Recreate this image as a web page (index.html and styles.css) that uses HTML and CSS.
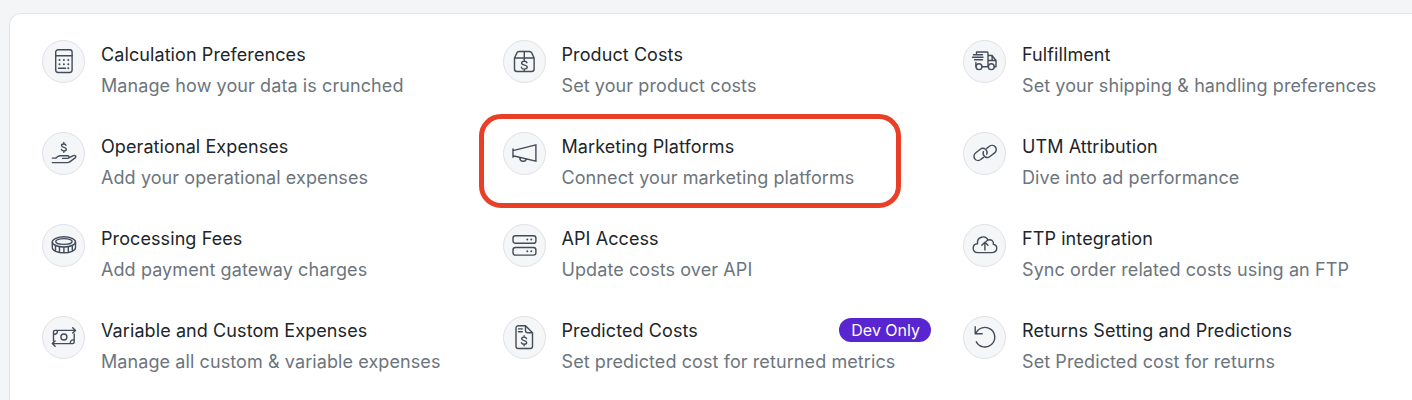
FILE: index.html
```
<!DOCTYPE html>
<html lang="en">
<head>
  <meta charset="UTF-8">
  <meta name="viewport" content="width=device-width, initial-scale=1.0">
  <title>Settings</title>
  <link rel="stylesheet" href="styles.css">
</head>
<body>

  <div class="card">
    <div class="item">
      <div class="icon">
        <svg viewBox="-.5 -.5 25 25"><rect x="4.2" y="0.2" width="16.4" height="22.8" rx="2.4"/><path d="M4.2 6.3h16.4M7 18.8h7"/><path class="dots" d="M8 10.5h0M12.4 10.5h0M16.8 10.5h0M8 14.8h0M12.4 14.8h0M16.8 14.8h0M16.8 18.8h0"/></svg>
      </div>
      <div class="text">
        <div class="title"><span>Calculation Preferences</span></div>
        <div class="desc">Manage how your data is crunched</div>
      </div>
    </div>

    <div class="item">
      <div class="icon">
        <svg viewBox="-.5 -.5 25 25"><path d="M2 8.5v11a2.5 2.5 0 0 0 2.5 2.5h14.6a2.5 2.5 0 0 0 2.5-2.5v-11L19.2 3.4a2.5 2.5 0 0 0-2.2-1.4H6.6a2.5 2.5 0 0 0-2.2 1.4zM2 8.5h19.6M11.8 2v8"/><path d="M14.5 13.2c-.3-1-1.3-1.5-2.7-1.5-1.6 0-2.7.7-2.7 1.9 0 2.9 5.6 1.1 5.6 4 0 1.3-1.2 2-2.9 2-1.5 0-2.6-.6-2.9-1.8M11.8 10v1.7M11.8 19.6v1.4"/></svg>
      </div>
      <div class="text">
        <div class="title"><span>Product Costs</span></div>
        <div class="desc">Set your product costs</div>
      </div>
    </div>

    <div class="item">
      <div class="icon">
        <svg viewBox="-.5 -.5 25 25"><path d="M4 4V2.5h10.5a1 1 0 0 1 1 1v13.7M15.5 6h4l4 5v6.2h-1.7M15.5 11h8M19.6 6v5M9.5 17.2h6.3M3.4 17.2V13M1 5.3h9M0 7.8h10.5M2 10.3h8"/><circle cx="6.5" cy="17.2" r="2.9"/><circle cx="18.8" cy="17.2" r="2.9"/></svg>
      </div>
      <div class="text">
        <div class="title"><span>Fulfillment</span></div>
        <div class="desc">Set your shipping &amp; handling preferences</div>
      </div>
    </div>

    <div class="item">
      <div class="icon">
        <svg viewBox="-.5 -.5 25 25"><path d="M14.5 3.7c-.3-.8-1.1-1.2-2.2-1.2-1.4 0-2.3.6-2.3 1.6 0 2.6 4.8 1 4.8 3.6 0 1.1-1 1.7-2.4 1.7-1.3 0-2.2-.5-2.5-1.5M12.3 1v1.5M12.3 9.4v1.4"/><path d="M.8 16.6h3.4l2.2-1.6c.8-.6 1.6-.8 2.5-.8h7.2c2 0 2.1 2.6 0 2.7h-5M17.8 16.2l4-2c1.8-.9 3.5.8 1.8 2.2l-5 3.7c-.9.7-1.7 1-2.8 1H.8"/></svg>
      </div>
      <div class="text">
        <div class="title"><span>Operational Expenses</span></div>
        <div class="desc">Add your operational expenses</div>
      </div>
    </div>

    <div class="item">
      <div class="highlight"></div>
      <div class="icon">
        <svg viewBox="-.5 -.5 25 25"><path d="M.5 7.5v8.3M.5 9.1L23.4 3.3v16.4L.5 14.3M7.3 16c-.2 4.4 5.8 5 6.4 1.5" stroke-linejoin="miter"/></svg>
      </div>
      <div class="text">
        <div class="title"><span>Marketing Platforms</span></div>
        <div class="desc">Connect your marketing platforms</div>
      </div>
    </div>

    <div class="item">
      <div class="icon">
        <svg viewBox="-.5 -.5 25 25"><path transform="translate(8 12.9) rotate(-38)" d="M.5 4.2H-3a4.2 4.2 0 0 1 0-8.4H3a4.2 4.2 0 0 1 2 7.9"/><path transform="translate(17.2 9.900) rotate(-38)" d="M-.5-4.200H3a4.200 4.200 0 0 1 0 8.400H-3a4.200 4.200 0 0 1-2-7.900"/></svg>
      </div>
      <div class="text">
        <div class="title"><span>UTM Attribution</span></div>
        <div class="desc">Dive into ad performance</div>
      </div>
    </div>

    <div class="item">
      <div class="icon">
        <svg viewBox="-.5 -.5 25 25"><ellipse cx="12.4" cy="8.4" rx="11.6" ry="5.1"/><ellipse cx="12.4" cy="8" rx="8.2" ry="2.9"/><path d="M.8 8.4v5.8c0 2.8 5.2 5.1 11.6 5.1S24 17 24 14.2V8.4M4 12v5.4M8 13.2v5.6M12.4 13.5v5.7M16.8 13.2v5.6M20.8 12v5.4"/></svg>
      </div>
      <div class="text">
        <div class="title"><span>Processing Fees</span></div>
        <div class="desc">Add payment gateway charges</div>
      </div>
    </div>

    <div class="item">
      <div class="icon">
        <svg viewBox="-.5 -.5 25 25"><rect x=".5" y="2.2" width="22.9" height="7.6" rx="2.4"/><rect x=".5" y="14" width="22.9" height="7.6" rx="2.4"/><path class="dots" d="M14.8 6h0M18.8 6h0M14.8 17.8h0M18.8 17.8h0"/></svg>
      </div>
      <div class="text">
        <div class="title"><span>API Access</span></div>
        <div class="desc">Update costs over API</div>
      </div>
    </div>

    <div class="item">
      <div class="icon">
        <svg viewBox="-.5 -.5 25 25"><path d="M5.4 19.1C-.9 18.7-.8 10.7 5 10.2 4 3.2 13.2 1.1 15.5 6.6c3.1-1.3 6.1 1.1 5.3 4.2 5 1.1 4.4 7.8-.8 8.3zM15.5 6.6c-.9.3-1.5.8-2 1.5"/><path d="M12.4 16.5V9M9.3 11.8l3.1-3.1 3.1 3.1"/></svg>
      </div>
      <div class="text">
        <div class="title"><span>FTP integration</span></div>
        <div class="desc">Sync order related costs using an FTP</div>
      </div>
    </div>

    <div class="item">
      <div class="icon">
        <svg viewBox="-.5 -.5 25 25"><path d="M2 15.5V6.5a1.6 1.6 0 0 1 1.6-1.6H24M21.2 2.2L24 4.9l-2.8 2.7M22.7 8.5v8a1.6 1.6 0 0 1-1.6 1.6H.8M3.6 15.4L.8 18.1l2.8 2.7M2 8.9c2.5 0 4-1.5 4-4M22.7 14.1c-2.5 0-4 1.5-4 4"/><circle cx="12.4" cy="11.5" r="3"/></svg>
      </div>
      <div class="text">
        <div class="title"><span>Variable and Custom Expenses</span></div>
        <div class="desc">Manage all custom &amp; variable expenses</div>
      </div>
    </div>

    <div class="item">
      <div class="icon">
        <svg viewBox="-.5 -.5 25 25"><path d="M13 .2H5.8a2.3 2.3 0 0 0-2.3 2.3v18.2A2.3 2.3 0 0 0 5.8 23h11.9a2.3 2.3 0 0 0 2.3-2.3V7.2zM13 .2v4.7a2.3 2.3 0 0 0 2.3 2.3H20M6 3.4h3.8M6 6.2h3.8"/><path d="M14 13c-.3-.9-1.2-1.4-2.4-1.4-1.4 0-2.4.7-2.4 1.7 0 2.6 5 1.1 5 3.7 0 1.2-1.1 1.8-2.6 1.8-1.3 0-2.3-.5-2.6-1.6M11.6 10.2v1.4M11.6 18.8v1.5"/></svg>
      </div>
      <div class="text">
        <div class="title"><span>Predicted Costs</span><span class="badge">Dev Only</span></div>
        <div class="desc">Set predicted cost for returned metrics</div>
      </div>
    </div>

    <div class="item">
      <div class="icon">
        <svg viewBox="-.5 -.5 25 25"><path d="M3.8 16.3A9.8 9.8 0 1 0 3.3 8.2M2.7 1.3v6.9h7"/></svg>
      </div>
      <div class="text">
        <div class="title"><span>Returns Setting and Predictions</span></div>
        <div class="desc">Set Predicted cost for returns</div>
      </div>
    </div>
  </div>

</body>
</html>
```
FILE: styles.css
```
body {
  margin: 0;
  padding: 13px 0 0 9px;
  overflow: hidden;
  background-color: #f4f5f7;
  font-family: Inter, 'Liberation Sans', sans-serif;
  font-size: 18px;
  letter-spacing: 0.09px;
  color: #212529;
}
.card {
  box-sizing: border-box;
  width: 1416px;
  height: 387px;
  padding: 26px 32px 0;
  display: grid;
  grid-template-columns: repeat(3, 428.5px);
  grid-auto-rows: 62px;
  gap: 30px 32px;
  background-color: #fff;
  border: 1px solid #e3e5e9;
  border-bottom: 0;
  border-radius: 12px 12px 0 0;
}
.item {
  position: relative;
  display: flex;
  gap: 16px;
}
.icon {
  box-sizing: border-box;
  flex: none;
  width: 43px;
  height: 43px;
  display: flex;
  align-items: center;
  justify-content: center;
  background-color: #f4f6f8;
  border: 1px solid #dfe1e6;
  border-radius: 50%;
}
.icon svg {
  width: 25px;
  height: 25px;
  overflow: visible;
  fill: none;
  stroke: #434c5a;
  stroke-width: 1.4;
  stroke-linecap: round;
  stroke-linejoin: round;
}
.icon .dots {
  stroke-width: 2;
}
.text {
  flex: 1;
  white-space: nowrap;
}
.title, .desc {
  height: 31px;
  line-height: 30px;
}
.title {
  display: flex;
  justify-content: space-between;
}
.desc {
  color: #6c757d;
}
.badge {
  height: 24px;
  margin-top: 2px;
  padding: 0 11px 0 12px;
  line-height: 24px;
  font-size: 16px;
  letter-spacing: 0;
  color: #fff;
  background-color: #5925d0;
  border-radius: 12px;
}
.highlight {
  position: absolute;
  top: -18px;
  left: -24px;
  box-sizing: border-box;
  width: 422px;
  height: 94px;
  border: 5px solid #ea3f27;
  border-radius: 22px;
}
```
